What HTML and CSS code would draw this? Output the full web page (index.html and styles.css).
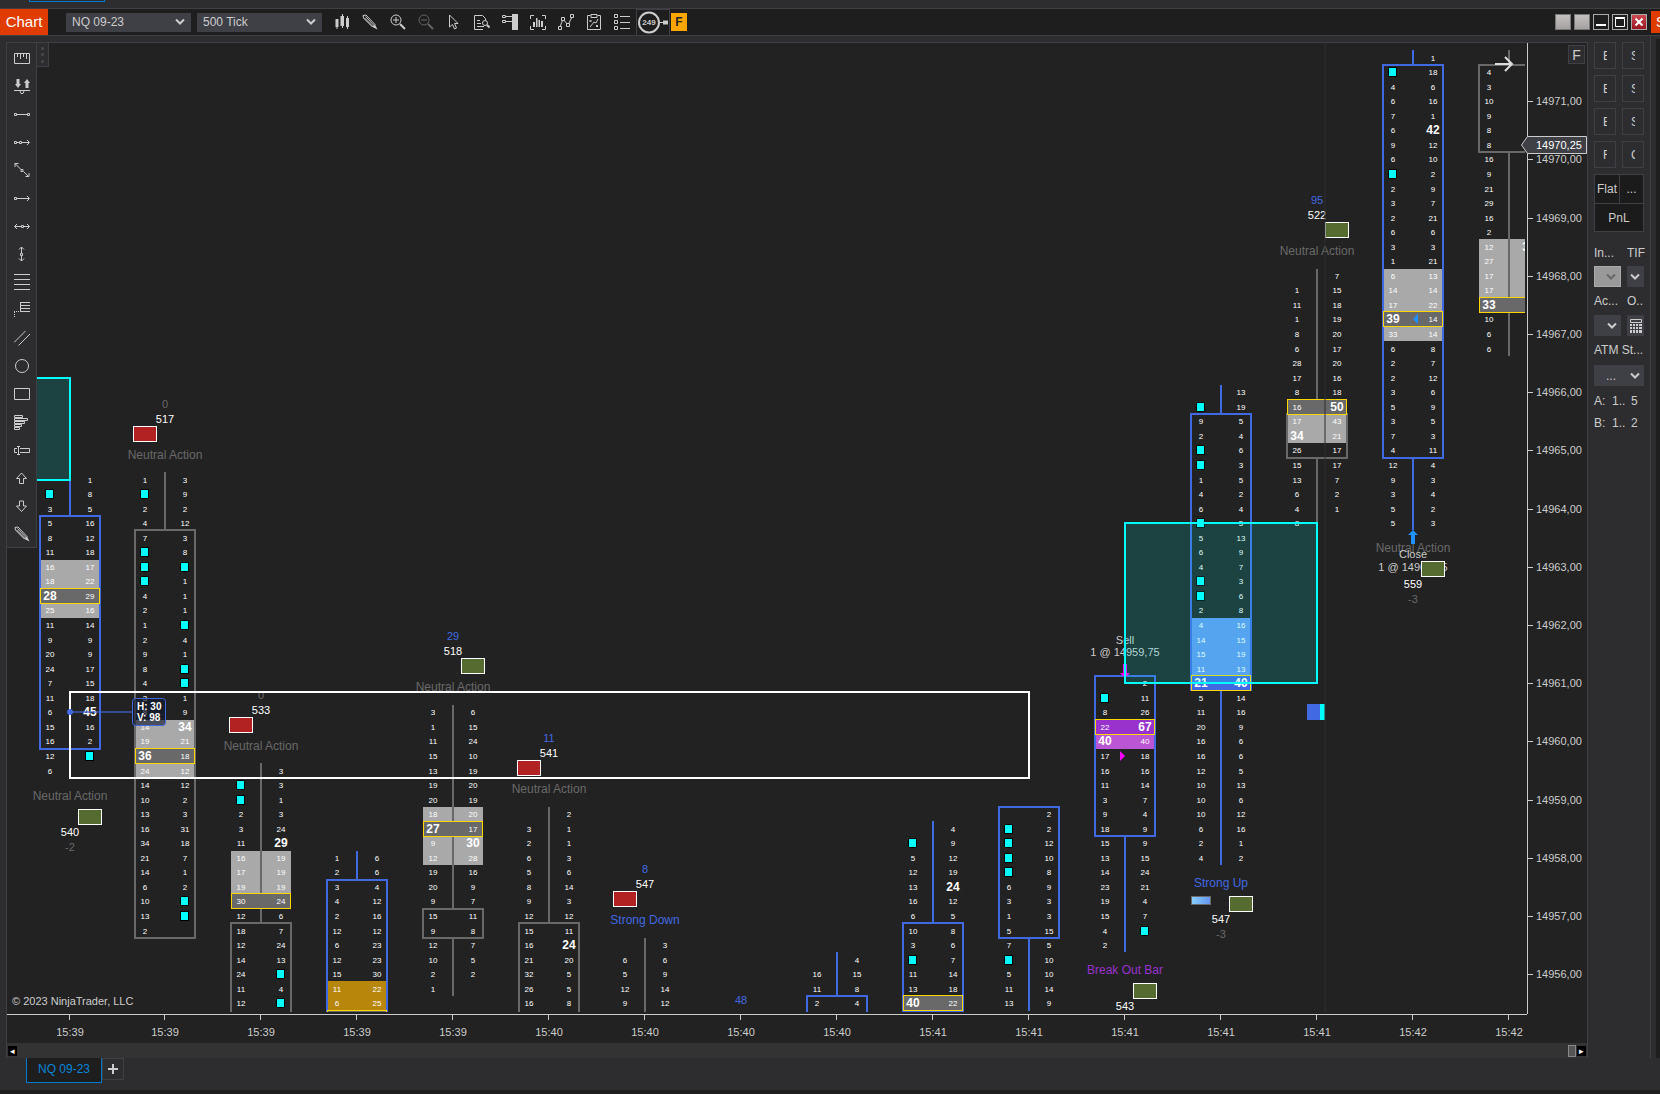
FILE: index.html
```html
<!DOCTYPE html>
<html lang="en">
<head>
    <meta charset="UTF-8">
    <meta name="viewport" content="width=device-width, initial-scale=1.0">
    <title>Chart - NQ 09-23</title>
    <link rel="stylesheet" href="styles.css">
</head>
<body>
    <div class="top-strip"><span class="tab-edge"></span></div>

    <header class="toolbar">
        <h1 class="badge">Chart</h1>
        <div class="pickers">
            <span class="select-wrap">
                <select aria-label="Instrument"><option>NQ 09-23</option></select>
                <svg class="chevron" viewBox="0 0 10 8"><path d="M1 1.500 5 5.500 9 1.500"/></svg>
            </span>
            <span class="select-wrap">
                <select aria-label="Interval"><option>500 Tick</option></select>
                <svg class="chevron" viewBox="0 0 10 8"><path d="M1 1.500 5 5.500 9 1.500"/></svg>
            </span>
        </div>
        <div class="tools">
            <button aria-label="Chart style"><svg viewBox="0 0 16 16"><path class="solid" d="M1.500 5h3v8h-1v2h-1v-2h-1zM7 2h1V0h1v2h1v10H9v2H8v-2H6.500V2zM12 4h1V2h1v2h1v9h-1v2h-1v-2h-1z"/></svg></button>
            <button aria-label="Drawing tools"><svg viewBox="0 0 16 16"><path d="M1 1.500 4 1l9 9.500-2.500 2.500L1.500 4zM3.500 2.500l8.500 9M2.500 4l8.500 8.500"/><path class="solid" d="M13 10.500 15.500 15.500 10.500 13z"/></svg></button>
            <button aria-label="Zoom in"><svg viewBox="0 0 16 16"><circle cx="6" cy="6" r="5"/><path d="M3 6h6M6 3v6"/><path class="thick" d="M10 10l5 5"/></svg></button>
            <button aria-label="Zoom out" class="dim"><svg viewBox="0 0 16 16"><circle cx="6" cy="6" r="5"/><path d="M3 6h6"/><path class="thick" d="M10 10l5 5"/></svg></button>
            <button aria-label="Cursor"><svg viewBox="0 0 16 16"><path d="M3.500 1v12l3-2.500 2 4.500 2-1-2-4.500h3.500z"/></svg></button>
            <button aria-label="Data box"><svg viewBox="0 0 16 16"><path d="M9 15.500H.500V1.500h8l3 3V6M3 6.500h3M3 9.500h4M3 12.500h7"/><circle cx="11" cy="9" r="2.500"/><path class="thick" d="M13 11l2.500 2.500"/></svg></button>
            <button aria-label="Chart trader"><svg viewBox="0 0 16 16"><path class="solid" d="M10 0h6v16h-6z"/><path d="M.500 1.500h3v2h-3zM.500 6.500h3v2h-3zM4 2.500h6M4 7.500h6"/></svg></button>
            <button aria-label="Indicators"><svg viewBox="0 0 16 16"><path d="M4 1.500H.500V5M12 1.500h3.500V5M4 15.500H.500V12M12 15.500h3.500V12"/><path class="solid" d="M3 8h2v5H3zM6 4h1.500v9H6zM8.500 6H10v7H8.500zM11 7h2v6h-2z"/></svg></button>
            <button aria-label="Strategies"><svg viewBox="0 0 16 16"><path d="M2 13 5 5l5 6 4-8"/><path class="knot" d="M.500 12.500h3v3h-3zM3.500 3.500h3v3h-3zM8.500 9.500h3v3h-3zM12.500.500h3v3h-3z"/></svg></button>
            <button aria-label="Performance"><svg viewBox="0 0 16 16"><path d="M4.500 1.500h-3v14h13v-14h-3M5 .500h6v3H5zM4 13l4-5 2 1 2-4M3.500 6l2 2M5.500 6l-2 2M10 11l2 2M12 11l-2 2"/></svg></button>
            <button aria-label="Properties"><svg viewBox="0 0 16 16"><path d="M.500.500h3v3h-3zM.500 6.500h3v3h-3zM.500 12.500h3v3h-3zM6 2.500h10M6 8.500h10M6 14.500h10"/></svg></button>
        </div>
        <button class="gauge" aria-label="Tick counter">
            <svg viewBox="0 0 32 25"><circle cx="12" cy="12.500" r="10"/><path d="M22 12.500h5"/><path class="solid" d="M26 10.500h5v4h-5z"/><text x="12" y="15">249</text></svg>
        </button>
        <button class="fixed-flag">F</button>
        <div class="window-buttons">
            <button aria-label="Link 1"></button>
            <button aria-label="Link 2"></button>
            <button class="dark" aria-label="Minimize"><svg viewBox="0 0 16 16"><path class="solid" d="M3 10h10v2H3z"/></svg></button>
            <button class="dark" aria-label="Maximize"><svg viewBox="0 0 16 16"><path d="M3.500 4.500h9v8h-9zM3 3.500h10"/></svg></button>
            <button class="close" aria-label="Close"><svg viewBox="0 0 16 16"><path class="thick" d="M4.500 4.500l7 7M11.500 4.500l-7 7"/></svg></button>
        </div>
        <span class="next-badge">S</span>
    </header>

    <main class="workspace">
        <section class="chart">
            <div class="plot">
                <svg id="plot"></svg>
                <p class="copyright">© 2023 NinjaTrader, LLC</p>
                <nav class="palette" aria-label="Drawing tools">
                    <button aria-label="Ruler"><svg viewBox="0 0 16 16"><path d="M.500 3.500h15v10H.500zM3.500 4v3M6.500 4v5M9.500 4v3M12.500 4v5"/></svg></button>
                    <button aria-label="Risk reward"><svg viewBox="0 0 16 16"><path class="solid" d="M2.500 1h3v5H7l-3 4-3-4h1.500zM11.500 10h3V5H16l-3-4-3 4h1.500z"/><path d="M0 12.500h16M6 13l1 2.500h2l1-2.500"/></svg></button>
                    <button aria-label="Line"><svg viewBox="0 0 16 16"><path d="M.500 7.500h2v2h-2zM13.500 7.500h2v2h-2zM3 8.500h10"/></svg></button>
                    <button aria-label="Ray"><svg viewBox="0 0 16 16"><path d="M.500 7.500h2v2h-2zM5.500 7.500h2v2h-2zM3 8.500h2M8 8.500h7M13 6l2.500 2.500L13 11"/></svg></button>
                    <button aria-label="Extended line"><svg viewBox="0 0 16 16"><path d="M1 1.500l6 6M9.500 9.500l5 5M7 7.500h2v2H7zM1 5V1.500h3.500M15 11v3.500h-3.500"/></svg></button>
                    <button aria-label="Arrow line"><svg viewBox="0 0 16 16"><path d="M.500 7.500h2v2h-2zM3 8.500h12M13 6l2.500 2.500L13 11"/></svg></button>
                    <button aria-label="Horizontal line"><svg viewBox="0 0 16 16"><path d="M7.500 7.500h2v2h-2zM1 8.500h6M10 8.500h5M13 6l2.500 2.500L13 11M3 6 .500 8.500 3 11"/></svg></button>
                    <button aria-label="Vertical line"><svg viewBox="0 0 16 16"><path d="M6.500 7.500h2v2h-2zM7.500 1v6M7.500 10v5M5 3.500 7.500 1 10 3.500M5 12.500 7.500 15 10 12.500"/></svg></button>
                    <button aria-label="Fibonacci retracements"><svg viewBox="0 0 16 16"><path d="M0 .500h16M0 5.500h16M0 10.500h16M0 15.500h16"/></svg></button>
                    <button aria-label="Fibonacci extensions"><svg viewBox="0 0 16 16"><path d="M6.500 0v10M6 .500h10M6 3.500h10M6 6.500h10M6 9.500h10"/><path stroke-dasharray="1 1" d="M0 9.500h6M.500 10v6"/></svg></button>
                    <button aria-label="Channel"><svg viewBox="0 0 16 16"><path d="M0 12.500 11.500 1M4.500 15.500 16 4"/></svg></button>
                    <button aria-label="Ellipse"><svg viewBox="0 0 16 16"><circle cx="8" cy="8" r="6.500"/></svg></button>
                    <button aria-label="Rectangle"><svg viewBox="0 0 16 16"><path d="M.500 2.500h15v11H.500z"/></svg></button>
                    <button aria-label="Volume profile"><svg viewBox="0 0 16 16"><path d="M.500 1.500h8v2h-8zM.500 4.500h13v2h-13zM.500 7.500h10v2H.500zM.500 10.500h7v2h-7zM.500 13.500h5v2h-5z"/></svg></button>
                    <button aria-label="Text"><svg viewBox="0 0 16 16"><path d="M3 6.500H.500v4H3M6 6.500h9.500v4H6M4.500 5v7M3 4.500h3M3 12.500h3"/></svg></button>
                    <button aria-label="Arrow up"><svg viewBox="0 0 16 16"><path d="M5.500 13.500V8.500h-3L7.500 3l5 5.500h-3v5z"/></svg></button>
                    <button aria-label="Arrow down"><svg viewBox="0 0 16 16"><path d="M5.500 3v5h-3l5 5.500 5-5.500h-3V3z"/></svg></button>
                    <button aria-label="Pencil"><svg viewBox="0 0 16 16"><path d="M1 1.500 4 1l9 9.500-2.500 2.500L1.500 4zM3.500 2.500l8.500 9M2.500 4l8.500 8.500"/><path class="solid" d="M13 10.500 15.500 15.500 10.500 13z"/></svg></button>
                </nav>
                <span class="grip"><i></i><i></i><i></i></span>
            </div>
            <div class="price-axis">
                <svg id="prices"></svg>
                <button class="fix-scale">F</button>
            </div>
            <div class="time-axis"><svg id="times"></svg></div>
            <div class="scrollbar">
                <button aria-label="Scroll left">◂</button>
                <span class="thumb"></span>
                <button aria-label="Scroll right">▸</button>
            </div>
        </section>

        <aside class="trader">
            <div class="orders">
                <button><span>Buy</span></button><button><span>Sell</span></button>
                <button><span>Buy</span></button><button><span>Sell</span></button>
                <button><span>Buy</span></button><button><span>Sell</span></button>
                <button><span>Rev</span></button><button><span>Close</span></button>
            </div>
            <div class="position">
                <span>Flat</span><span>...</span>
                <span class="pnl">PnL</span>
            </div>
            <div class="fields">
                <label for="instrument">In...</label>
                <label for="tif">TIF</label>
                <span class="select-wrap off"><select id="instrument" disabled></select><svg class="chevron" viewBox="0 0 10 8"><path d="M1 1.500 5 5.500 9 1.500"/></svg></span>
                <span class="select-wrap"><select id="tif"></select><svg class="chevron" viewBox="0 0 10 8"><path d="M1 1.500 5 5.500 9 1.500"/></svg></span>
                <label for="account">Ac...</label>
                <label for="qty">O..</label>
                <span class="select-wrap"><select id="account"></select><svg class="chevron" viewBox="0 0 10 8"><path d="M1 1.500 5 5.500 9 1.500"/></svg></span>
                <button class="calc" id="qty" aria-label="Order quantity"><svg viewBox="0 0 12 14"><path d="M.500.500h11v3H.500z"/><path class="solid" d="M0 5h2v2H0zM3 5h2v2H3zM6 5h2v2H6zM9 5h3v2H9zM0 8h2v2H0zM3 8h2v2H3zM6 8h2v2H6zM9 8h3v2H9zM0 11h2v3H0zM3 11h2v3H3zM6 11h2v3H6zM9 11h3v3H9z"/></svg></button>
                <label class="wide" for="atm">ATM St...</label>
                <span class="select-wrap wide dots"><select id="atm"><option>...</option></select><svg class="chevron" viewBox="0 0 10 8"><path d="M1 1.500 5 5.500 9 1.500"/></svg></span>
            </div>
            <dl class="quotes">
                <dt>A:</dt><dd>1..</dd><dd>5</dd>
                <dt>B:</dt><dd>1..</dd><dd>2</dd>
            </dl>
        </aside>
        <div class="next-window"></div>
    </main>

    <footer class="tabs">
        <a class="tab" href="#">NQ 09-23</a>
        <button class="add" aria-label="Add tab"><svg viewBox="0 0 10 10"><path class="thick" d="M5 0v10M0 5h10"/></svg></button>
    </footer>

    <script src="chart.js"></script>
</body>
</html>
```

FILE: styles.css
```css
* {
    box-sizing: border-box;
}

body {
    margin: 0;
    height: 100vh;
    display: flex;
    flex-direction: column;
    overflow: hidden;
    background: #2d2d30;
    color: #ccc;
    font-family: "Liberation Sans", Arial, sans-serif;
    font-size: 12px;
}

button, select {
    font: inherit;
    color: inherit;
    margin: 0;
    padding: 0;
    border: 0;
    border-radius: 0;
    background: none;
}

svg {
    display: block;
    fill: none;
    stroke: #ccc;
    stroke-width: 1;
}

svg .solid {
    fill: #ccc;
    stroke: none;
}

svg .thick {
    stroke-width: 2;
}

svg .knot {
    fill: #1e1e1e;
}

svg text {
    stroke: none;
}

/* Title bar */
.top-strip {
    height: 9px;
    padding-left: 29px;
    border-bottom: 1px solid #3f3f42;
}

.tab-edge {
    display: block;
    width: 76px;
    height: 2px;
    border: 1px solid #007acc;
    border-top: 0;
}

.toolbar {
    display: flex;
    align-items: center;
    height: 27px;
    background: #1e1e1e;
    border-bottom: 1px solid #3f3f42;
}

.badge {
    margin: 0;
    width: 48px;
    line-height: 26px;
    text-align: center;
    font-size: 15px;
    font-weight: normal;
    color: #fff;
    background: #e03c00;
}

.pickers {
    display: flex;
    gap: 6px;
    margin: 0 12px 0 18px;
}

.pickers .select-wrap {
    width: 125px;
    height: 19px;
}

.select-wrap {
    display: grid;
    align-items: center;
    background: #3f3f46;
}

.select-wrap select, .select-wrap .chevron {
    grid-area: 1 / 1;
}

.select-wrap select {
    appearance: none;
    width: 100%;
    height: 100%;
    padding-left: 6px;
}

.chevron {
    width: 10px;
    height: 8px;
    margin-right: 6px;
    justify-self: end;
    pointer-events: none;
}

.chevron path {
    stroke-width: 2;
}

.tools {
    display: flex;
    gap: 12px;
}

.tools svg, .palette svg, .window-buttons svg {
    width: 16px;
    height: 16px;
}

.dim {
    opacity: 0.4;
}

.gauge {
    margin-left: 6px;
    border: 1px solid #3f3f46;
}

.gauge svg {
    width: 32px;
    height: 25px;
}

.gauge circle {
    stroke-width: 2;
}

.gauge text {
    fill: #ccc;
    font-size: 8px;
    font-weight: bold;
    text-anchor: middle;
}

.fixed-flag {
    width: 16px;
    height: 18px;
    margin-left: 1px;
    background: #ffa500;
    color: #222;
    font-weight: bold;
}

.window-buttons {
    display: flex;
    gap: 3px;
    margin-left: auto;
    margin-right: 4px;
}

.window-buttons button {
    width: 16px;
    height: 16px;
    border: 1px solid #777;
    background: linear-gradient(#c4c0c0, #a5a1a1);
}

.window-buttons svg {
    margin: -1px;
}

.window-buttons svg path {
    stroke: #fff;
}

.window-buttons .solid {
    fill: #fff;
    stroke: none;
}

.window-buttons .dark {
    background: #1e1e1e;
    border-color: #aaa;
}

.window-buttons .close {
    background: linear-gradient(#d04a52, #9a1420);
    border-color: #aaa;
}

.next-badge {
    width: 9px;
    height: 22px;
    padding-left: 5px;
    line-height: 22px;
    overflow: hidden;
    font-size: 14px;
    color: #fff;
    background: #e03c00;
}

/* Chart */
.workspace {
    flex: 1;
    min-height: 0;
    display: flex;
}

.chart {
    flex: 1;
    min-width: 0;
    margin: 6px 0 0 6px;
    border: 1px solid #3f3f46;
    border-bottom: 0;
    display: grid;
    grid-template-columns: 1fr 60px;
    grid-template-rows: 1fr 29px 15px;
    background: #222;
}

.plot {
    position: relative;
    min-width: 0;
    padding: 0 2px 2px 0;
}

.plot > svg, .price-axis > svg, .time-axis > svg {
    width: 100%;
    height: 100%;
}

.copyright {
    position: absolute;
    left: 5px;
    bottom: 7px;
    margin: 0;
    font-size: 11px;
}

.price-axis {
    position: relative;
    border-left: 1px solid #ccc;
}

.price-axis > svg {
    overflow: visible;
}

.price-axis text, .time-axis text {
    fill: #ccc;
    font-size: 11px;
}

.price-axis .last-box {
    fill: #3f3f46;
}

.price-axis .last {
    fill: #fff;
}

.fix-scale {
    position: absolute;
    top: 2px;
    right: 2px;
    width: 17px;
    height: 19px;
    border: 1px solid #3f3f46;
    background: #2d2d30;
    font-size: 14px;
}

.time-axis {
    grid-column: 1 / 3;
    border-top: 1px solid #ccc;
    margin-right: 60px;
}

.time-axis text {
    text-anchor: middle;
}

.scrollbar {
    grid-column: 1 / 3;
    display: flex;
    align-items: center;
    padding: 0 1px;
    background: #333;
}

.scrollbar button {
    width: 9px;
    height: 10px;
    line-height: 10px;
    background: #000;
    color: #fff;
    font-size: 9px;
    overflow: hidden;
}

.scrollbar .thumb {
    width: 8px;
    height: 12px;
    margin-left: auto;
    margin-right: 1px;
    border: 1px solid #888;
    background: #555;
}

/* Floating drawing palette */
.palette {
    position: absolute;
    top: 0;
    left: 0;
    width: 30px;
    padding: 7px 0 5px;
    display: flex;
    flex-direction: column;
    align-items: center;
    gap: 12px;
    border-right: 1px solid #3f3f46;
    border-bottom: 1px solid #3f3f46;
    background: #2d2d30;
}

.grip {
    position: absolute;
    top: 0;
    left: 30px;
    width: 12px;
    height: 24px;
    display: flex;
    flex-direction: column;
    align-items: center;
    justify-content: space-evenly;
    border: 1px solid #3f3f46;
    border-width: 0 1px 1px 0;
    background: #2d2d30;
}

.grip i {
    width: 3px;
    height: 3px;
    border-radius: 50%;
    background: #4a4a4e;
}

/* Footprint cells */
#plot text {
    text-anchor: middle;
    fill: #fff;
    font-size: 8px;
}

#plot .big {
    font-size: 12px;
    font-weight: bold;
}

#plot .note {
    font-size: 11px;
}

#plot .label {
    font-size: 12px;
}

#plot .muted {
    fill: #696969;
}

#plot .blue {
    fill: #4169e1;
}

#plot .purple {
    fill: #9932cc;
}

#plot .order {
    fill: #ccc;
}

#plot .info {
    font-size: 10px;
    font-weight: bold;
    text-anchor: start;
}

/* Order panel */
.trader {
    width: 63px;
    padding: 6px;
    border-right: 1px solid #3f3f46;
}

.orders {
    display: grid;
    grid-template-columns: 22px 22px;
    grid-auto-rows: 27px;
    gap: 6px;
}

.orders button {
    border: 1px solid #3f3f46;
}

.orders span {
    display: block;
    width: 4px;
    margin: 0 auto;
    overflow: hidden;
}

.position {
    display: grid;
    grid-template-columns: 1fr 1fr;
    grid-auto-rows: 28px;
    margin-top: 6px;
    border: 1px solid #3f3f46;
    background: #1b1b1b;
    line-height: 28px;
    text-align: center;
}

.position span:nth-child(2) {
    border-left: 1px solid #3f3f46;
}

.position .pnl {
    grid-column: 1 / 3;
    border-top: 1px solid #3f3f46;
}

.fields {
    display: grid;
    grid-template-columns: 27px 17px;
    grid-template-rows: 21px 21px 28px 21px 29px 21px;
    column-gap: 6px;
    margin-top: 13px;
    line-height: 16px;
    white-space: nowrap;
}

.fields label:nth-of-type(n + 3) {
    padding-top: 6px;
}

.fields .chevron {
    margin-right: 4px;
}

.fields .off {
    border: 1px solid #aaa;
    background: #999;
}

.fields .off path {
    stroke: #666;
}

.fields .wide {
    grid-column: 1 / 3;
}

.fields .dots select {
    padding-left: 12px;
}

.calc {
    display: grid;
    place-items: center;
    background: #3f3f46;
}

.calc svg {
    width: 12px;
    height: 14px;
}

.quotes {
    display: grid;
    grid-template-columns: 18px 19px 1fr;
    grid-auto-rows: 22px;
    margin: 4px 0 0;
    line-height: 22px;
}

.quotes dd {
    margin: 0;
}

.next-window {
    width: 9px;
    margin-top: 3px;
    border-left: 5px solid #2d2d30;
    background: #1e1e1e;
}

/* Tabs */
.tabs {
    display: flex;
    height: 36px;
    padding-left: 26px;
    border-bottom: 4px solid #1e1e1e;
}

.tab {
    width: 76px;
    height: 25px;
    line-height: 23px;
    border: 1px solid #007acc;
    border-top: 0;
    background: #1e1e1e;
    color: #0a84d8;
    text-align: center;
    text-decoration: none;
}

.add {
    display: grid;
    place-items: center;
    width: 22px;
    height: 22px;
    border: 1px solid #3f3f46;
}

.add svg {
    width: 10px;
    height: 10px;
}
```

FILE: chart.js
```js
const NS = 'http://www.w3.org/2000/svg';
const TICK = 14.55;      // height of one price level
const BASE = 116.4;      // y of 14970,00
const STEP = 96;         // distance between bars

const BLUE = '#4169e1';
const GRAY = '#696969';

const barX = i => i === 0 ? 63 : 62 + STEP * i;
const rowY = k => Math.round(BASE + TICK * k);

// start: first row, counted in ticks below 14970,00
// rows: "bid ask", c = cyan marker, . = empty, * = large print
// hi: [from, to, colour], box: [from, to]
const bars = [
    { time: '15:39', color: BLUE, start: 22, box: [25, 40], hi: [28, 31, '#a9a9a9'], poc: 30,
      rows: '. 1|c 8|3 5|5 16|8 12|11 18|16 17|18 22|*28 29|25 16|11 14|9 9|20 9|24 17|7 15|11 18|6 *45|15 16|16 2|12 c|6 .',
      side: 'down', label: 'Neutral Action', vol: '540', delta: '-2', signal: 'green', noTail: true },
    { time: '15:39', color: GRAY, start: 22, box: [26, 53], hi: [39, 42, '#a9a9a9'], poc: 41,
      rows: '1 3|c 9|2 2|4 12|7 3|c 8|c c|c 1|4 1|2 1|1 c|2 4|9 1|8 c|4 c|3 1|8 9|14 *34|19 21|*36 18|24 12|14 12|10 2|13 3|16 31|34 18|21 7|14 1|6 2|10 c|13 c|2 .',
      side: 'up', label: 'Neutral Action', vol: '517', delta: '0', signal: 'red' },
    { time: '15:39', color: GRAY, start: 42, box: [53, 62], hi: [48, 50, '#a9a9a9'], poc: 51,
      rows: '. 3|c 3|c 1|2 3|3 24|11 *29|16 19|17 19|19 19|30 24|12 6|18 7|12 24|14 13|24 c|11 4|12 c',
      side: 'up', label: 'Neutral Action', vol: '533', delta: '0', signal: 'red' },
    { time: '15:39', color: BLUE, start: 48, box: [50, 62], hi: [57, 58, '#b8860b'], poc: 59,
      rows: '1 6|2 6|3 4|4 12|2 16|12 12|6 23|12 23|15 30|11 22|6 25' },
    { time: '15:39', color: GRAY, start: 38, box: [52, 53], hi: [45, 48, '#a9a9a9'], poc: 46,
      rows: '3 6|1 15|11 24|15 10|13 19|19 20|20 19|18 20|*27 17|9 *30|12 28|19 16|20 9|9 7|15 11|9 8|12 7|10 5|2 2|1 .',
      side: 'up', label: 'Neutral Action', vol: '518', delta: '29', signal: 'green' },
    { time: '15:40', color: GRAY, start: 45, box: [53, 62],
      rows: '. 2|3 1|2 1|6 3|5 6|8 14|9 3|12 12|15 11|16 *24|21 20|32 5|26 5|16 8',
      side: 'up', label: 'Neutral Action', vol: '541', delta: '11', signal: 'red' },
    { time: '15:40', color: GRAY, start: 54, box: [62, 64],
      rows: '. 3|6 6|5 9|12 14|9 12',
      side: 'up', label: 'Strong Down', vol: '547', delta: '8', signal: 'red', tone: 'blue' },
    { time: '15:40', color: GRAY, start: 63, box: [66, 68], rows: '', side: 'up', label: '', vol: '', delta: '48' },
    { time: '15:40', color: BLUE, start: 55, box: [58, 62], rows: '. 4|16 15|11 8|2 4' },
    { time: '15:41', color: BLUE, start: 46, box: [53, 58], poc: 58,
      rows: '. 4|c 9|5 12|12 19|13 *24|16 12|6 5|10 8|3 6|c 7|11 14|13 18|*40 22' },
    { time: '15:41', color: BLUE, start: 45, box: [45, 53],
      rows: '. 2|c 2|c 12|c 10|c 8|6 9|3 3|1 3|5 15|7 5|c 10|5 10|11 14|13 9' },
    { time: '15:41', color: BLUE, start: 36, box: [36, 46], hi: [40, 40, '#ba55d3'], poc: 39, pocColor: '#9932cc',
      rows: '. 2|c 11|8 26|22 *67|*40 40|17 18|16 16|11 14|3 7|9 4|18 9|15 9|13 15|14 24|23 21|19 4|15 7|4 c|2 .',
      side: 'down', label: 'Break Out Bar', vol: '543', delta: '', signal: 'green', tone: 'purple' },
    { time: '15:41', color: BLUE, start: 16, box: [18, 36], hi: [32, 35, '#6495ed'], poc: 36, pocColor: BLUE,
      rows: '. 13|c 19|9 5|2 4|c 6|c 3|1 5|4 2|6 4|c 5|5 13|6 9|4 7|c 3|c 6|2 8|4 16|14 15|15 19|11 13|*21 *40|5 14|11 16|20 9|16 6|16 6|12 5|10 13|10 6|10 12|6 16|2 1|4 2',
      side: 'down', label: 'Strong Up', vol: '547', delta: '-3', signal: 'green', tone: 'blue' },
    { time: '15:41', color: GRAY, start: 8, box: [18, 20], hi: [18, 19, '#a9a9a9'], poc: 17,
      rows: '. 7|1 15|11 18|1 19|8 20|6 17|28 20|17 16|8 18|16 *50|17 43|*34 21|26 17|15 17|13 7|6 2|4 1|8 .',
      side: 'up', label: 'Neutral Action', vol: '522', delta: '95', signal: 'green' },
    { time: '15:42', color: BLUE, start: -7, box: [-6, 20], hi: [8, 12, '#a9a9a9'], poc: 11,
      rows: '. 1|c 18|4 6|6 16|7 1|6 *42|9 12|6 10|c 2|2 9|3 7|2 21|6 6|3 3|1 21|6 13|14 14|17 22|*39 14|33 14|6 8|2 7|2 12|3 6|5 9|3 5|7 3|4 11|12 4|9 3|3 4|5 2|5 3',
      side: 'down', label: 'Neutral Action', vol: '559', delta: '-3', signal: 'green' },
    { time: '15:42', color: GRAY, start: -7, box: [-6, -1], hi: [6, 9, '#a9a9a9'], poc: 10,
      rows: '. .|4 .|3 .|10 .|9 .|8 .|8 .|16 .|9 .|21 .|29 .|16 .|2 .|12 *31|27 .|17 .|17 .|*33 .|10 .|6 .|6 .' }
];

const plot = document.getElementById('plot');
const prices = document.getElementById('prices');
const times = document.getElementById('times');

function add(parent, name, attrs, text) {
    const el = document.createElementNS(NS, name);
    for (const key in attrs) el.setAttribute(key, attrs[key]);
    if (text !== undefined) el.textContent = text;
    parent.appendChild(el);
    return el;
}

function rect(x, y, w, h, fill, stroke = 'none', width = 1) {
    return add(plot, 'rect', { x, y, width: w, height: h, fill, stroke, 'stroke-width': width });
}

function label(x, y, text, cls) {
    add(plot, 'text', { x, y: y + 4, class: cls }, text);
}

function drawCell(x, y, value) {
    if (value === '.') return;
    if (value === 'c') {
        rect(x - 5, y - 5, 9, 10, '#000');
        rect(x - 4, y - 4, 7, 8, '#0ff');
    } else if (value[0] === '*') {
        add(plot, 'text', { x, y: y + 4, class: 'big' }, value.slice(1));
    } else {
        add(plot, 'text', { x, y: y + 3 }, value);
    }
}

function drawBar(bar, i) {
    const x = barX(i);
    const rows = bar.rows ? bar.rows.split('|') : [];
    const end = bar.start + rows.length - 1;
    const [from, to] = bar.box;
    const boxTop = rowY(from - 0.5);
    const boxBottom = rowY(to + 0.5);

    if (bar.hi) {
        const top = rowY(bar.hi[0] - 0.5);
        rect(x - 30, top, 60, rowY(bar.hi[1] + 0.5) - top, bar.hi[2]);
    }
    rect(x - 1, rowY(bar.start - 0.5), 2, Math.max(0, boxTop - rowY(bar.start - 0.5)), bar.color);
    if (end > to && !bar.noTail) rect(x - 1, boxBottom, 2, rowY(end + 0.5) - boxBottom, bar.color);
    rect(x - 30, boxTop, 60, boxBottom - boxTop, 'none', bar.color, 2);

    if (bar.poc) {
        rect(x - 29.5, rowY(bar.poc) - 7.5, 59, 15, bar.pocColor || GRAY, '#ffd700');
    }
    rows.forEach((row, r) => {
        const [bid, ask] = row.split(' ');
        const y = rowY(bar.start + r);
        drawCell(x - 20, y, bid);
        drawCell(x + 20, y, ask);
    });

    if (bar.side) {
        const dir = bar.side === 'up' ? -1 : 1;
        const y = rowY(bar.side === 'up' ? bar.start : end);
        label(x, y + dir * 25, bar.label, 'label ' + (bar.tone || 'muted'));
        label(x, y + dir * 61, bar.vol, 'note');
        label(x, y + dir * 76, bar.delta, 'note ' + (Number(bar.delta) > 0 ? 'blue' : 'muted'));
    }
}

function drawSignal(bar, i) {
    if (!bar.signal) return;
    const end = bar.start + bar.rows.split('|').length - 1;
    const y = bar.side === 'up' ? rowY(bar.start) - 46 : rowY(end) + 46;
    const x = barX(i) + (bar.signal === 'red' ? -32 : 8);
    rect(x + 0.5, y - 7.5, 23, 15, bar.signal === 'red' ? '#b22222' : '#556b2f', '#fff');
}

function zone(x1, x2, k1, k2) {
    rect(x1, rowY(k1), x2 - x1, rowY(k2) - rowY(k1), 'rgba(0, 255, 255, 0.15)', '#0ff', 2);
}

bars.forEach(drawBar);

// Order markers
label(barX(11), rowY(33), 'Sell', 'note order');
label(barX(11), rowY(34) - 2, '1 @ 14959,75', 'note order');
add(plot, 'path', { d: `M${barX(11) - 2} ${rowY(35) - 5}h4v9h3l-5 5-5-5h3z`, fill: '#f0f', stroke: 'none' });
label(barX(14), rowY(27) + 2, 'Close', 'note order');
label(barX(14), rowY(28), '1 @ 14967,25', 'note order');
add(plot, 'path', { d: `M${barX(14) - 2} ${rowY(26) + 6}h4v-9h3l-5-5-5 5h3z`, fill: '#1e90ff', stroke: 'none' });
add(plot, 'path', { d: `M${barX(11) - 5} ${rowY(41) - 5}l5 5-5 5z`, fill: '#f0f', stroke: 'none' });
add(plot, 'path', { d: `M${barX(14) + 5} ${rowY(11) - 5}l-5 5 5 5z`, fill: '#1e90ff', stroke: 'none' });

bars.forEach(drawSignal);

// Small absorption flag beside the Strong Up bar
const grad = add(add(plot, 'defs', {}), 'linearGradient', { id: 'flag' });
add(grad, 'stop', { offset: '0', 'stop-color': '#87cefa' });
add(grad, 'stop', { offset: '1', 'stop-color': '#6495ed' });
rect(barX(12) - 29.5, rowY(51) - 4.5, 19, 8, 'url(#flag)', GRAY);

// Zones
zone(-20, barX(0), 15, 22);
zone(barX(11), barX(13), 25, 36);
rect(barX(0), rowY(36.6), barX(10) - barX(0), rowY(42.5) - rowY(36.6), 'none', '#fff', 2);

// Swing info
rect(barX(0), rowY(38) - 1, 62, 2, 'rgba(65, 105, 225, 0.6)');
add(plot, 'circle', { cx: barX(0), cy: rowY(38), r: 3, fill: BLUE, stroke: 'none' });
add(plot, 'rect', { x: 125.5, y: rowY(38) - 13.5, width: 33, height: 27, rx: 3, fill: 'rgba(20, 28, 50, 0.65)', stroke: BLUE });
add(plot, 'text', { x: 130, y: rowY(38) - 2, class: 'info' }, 'H: 30');
add(plot, 'text', { x: 130, y: rowY(38) + 9, class: 'info' }, 'V: 98');

// Session divider and current volume marker
rect(barX(13) - 10, rowY(38) - 8, 13, 16, BLUE);
rect(barX(13) + 3, rowY(38) - 8, 5, 16, '#0ff');
rect(barX(13) + 7, 0, 2, 969, 'rgba(45, 45, 45, 0.5)');
add(plot, 'path', { d: `M${barX(15) - 14} 21h17M${barX(15) - 4} 14l7 7-7 7`, stroke: '#ddd', 'stroke-width': 2 });

// Axes
for (let p = 14971; p >= 14956; p--) {
    const y = rowY((14970 - p) * 4);
    add(prices, 'path', { d: `M0 ${y + 0.5}h5` });
    add(prices, 'text', { x: 8, y: y + 4 }, p + ',00');
}
const lastY = rowY(-1);
add(prices, 'path', { d: `M-6.500 ${lastY}l6-8.500h59v17h-59z`, class: 'last-box' });
add(prices, 'text', { x: 8, y: lastY + 4, class: 'last' }, '14970,25');

bars.forEach((bar, i) => {
    add(times, 'path', { d: `M${barX(i) - 0.5} 0v5` });
    add(times, 'text', { x: barX(i), y: 21 }, bar.time);
});
```
